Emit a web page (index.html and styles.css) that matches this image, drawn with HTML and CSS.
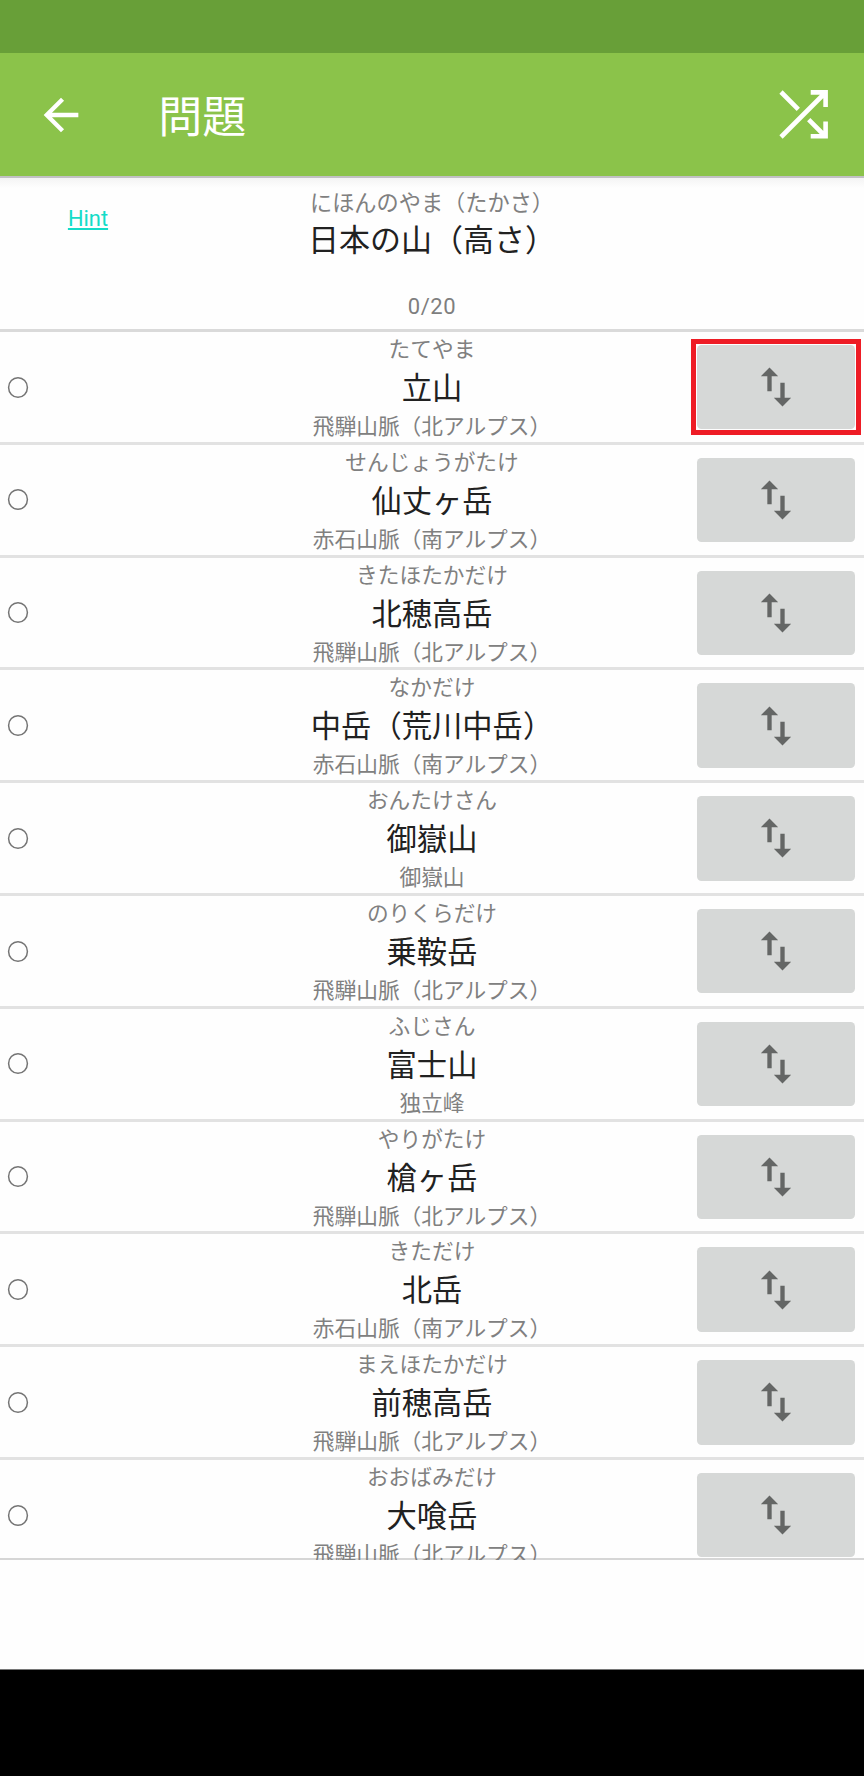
FILE: index.html
```html
<!DOCTYPE html>
<html lang="ja">
<head>
<meta charset="utf-8">
<title>問題</title>
<link rel="stylesheet" href="styles.css">
</head>
<body>
<svg class="defs" aria-hidden="true">
  <symbol id="swap" viewBox="0 0 24 24"><path d="M16 17.01V10h-2v7.01h-3L15 21l4-3.99h-3zM9 3L5 6.99h3V14h2V6.99h3L9 3z"/></symbol>
</svg>
<div class="screen">
  <div class="status-bar"></div>
  <header class="app-bar">
    <svg class="back" viewBox="0 0 24 24"><path d="M20 11H7.83l5.59-5.59L12 4l-8 8 8 8 1.41-1.41L7.83 13H20v-2z"/></svg>
    <h1 class="title">問題</h1>
    <svg class="shuffle" viewBox="0 0 49 49"><path d="M2 2 19.3 19.3M2 47 46 3M29.7 29.7 46 46M31.7 2.4H46.6V17M31.7 46.3H46.6V31.5"/></svg>
  </header>
  <section class="question">
    <a class="hint">Hint</a>
    <div class="question-text">
      <div class="question-kana">にほんのやま（たかさ）</div>
      <div class="question-name">日本の山（高さ）</div>
      <div class="count">0/20</div>
    </div>
  </section>
  <main class="list" id="list"></main>
  <div class="footer"></div>
  <div class="nav-bar"></div>
</div>
<script src="app.js"></script>
</body>
</html>
```
FILE: styles.css
```css
* { box-sizing: border-box; }
body {
  margin: 0;
  background: #fefefe;
  font-family: "Noto Sans CJK JP", sans-serif;
  color: #212121;
}
.defs { position: absolute; width: 0; height: 0; }
.screen {
  width: 864px;
  height: 1776px;
  display: flex;
  flex-direction: column;
  overflow: hidden;
}
.screen > * { flex-shrink: 0; }
.status-bar { height: 53px; background: #689f38; }
.app-bar {
  height: 123px;
  display: flex;
  align-items: center;
  padding: 0 36.5px 0 35.4px;
  background: #8bc34a;
}
.back { width: 52px; height: 52px; fill: #fff; }
.title {
  margin: 0 auto 2px 70.8px;
  font-size: 44px;
  font-weight: 400;
  line-height: 64px;
  color: #fff;
}
.shuffle {
  width: 49px;
  height: 49px;
  fill: none;
  stroke: #fff;
  stroke-width: 4.6;
}
.question {
  height: 156px;
  display: grid;
  grid-template-columns: 176px 1fr 176px;
  border-top: 2px solid #c2c1c4;
  border-bottom: 3px solid #dadada;
  background: linear-gradient(#f4f4f4, #fefefe 10px);
}
.hint {
  justify-self: center;
  margin-top: 28px;
  height: 26px;
  font: 21.9px/26px Roboto, sans-serif;
  color: #14dcc8;
  text-decoration: underline;
  text-decoration-thickness: 1.5px;
  text-underline-offset: 2px;
}
.question-text { text-align: center; white-space: nowrap; }
.question-kana {
  margin-top: 7px;
  font-size: 22.2px;
  line-height: 32px;
  color: #808080;
}
.question-name { font-size: 31px; line-height: 42px; }
.count {
  margin-top: 35px;
  font: 22px/26px Roboto, sans-serif;
  letter-spacing: .6px;
  color: #7e7e7e;
}
.list {
  height: 1228px;
  overflow: hidden;
  background: linear-gradient(#d6d6d6, #d6d6d6) bottom / 100% 2px no-repeat;
}
.row {
  height: 112.8px;
  display: grid;
  grid-template-columns: 176px 1fr 176px;
  border-bottom: 3px solid #e2e2e2;
}
.radio {
  width: 22px;
  height: 23px;
  margin: 43.6px 0 0 6.5px;
  fill: none;
  stroke: #747474;
  stroke-width: 1.5;
}
.labels { text-align: center; white-space: nowrap; }
.kana, .range { font-size: 21.7px; color: #808080; }
.kana { line-height: 31px; }
.name { font-size: 30.3px; line-height: 47px; }
.range { line-height: 30px; }
.swap {
  position: relative;
  width: 158px;
  height: 84.4px;
  margin: 13px 0 0 9px;
  display: flex;
  align-items: center;
  justify-content: center;
  border-radius: 4.5px;
  background: #d6d8d7;
}
.swap svg { width: 52px; height: 52px; fill: #646665; }
.swap.marked::after {
  content: "";
  position: absolute;
  inset: -6px;
  border: 5px solid #ee1c25;
}
.footer { height: 110px; border-bottom: 1px solid #777; }
.nav-bar { height: 106px; background: #000; }
```
FILE: app.js
```js
const north = "飛騨山脈（北アルプス）";
const south = "赤石山脈（南アルプス）";
const rows = [
  ["たてやま", "立山", north],
  ["せんじょうがたけ", "仙丈ヶ岳", south],
  ["きたほたかだけ", "北穂高岳", north],
  ["なかだけ", "中岳（荒川中岳）", south],
  ["おんたけさん", "御嶽山", "御嶽山"],
  ["のりくらだけ", "乗鞍岳", north],
  ["ふじさん", "富士山", "独立峰"],
  ["やりがたけ", "槍ヶ岳", north],
  ["きただけ", "北岳", south],
  ["まえほたかだけ", "前穂高岳", north],
  ["おおばみだけ", "大喰岳", north],
];
document.getElementById("list").innerHTML = rows.map(([kana, name, range], i) => `
  <div class="row">
    <svg class="radio" viewBox="0 0 22 23"><ellipse cx="11" cy="11.5" rx="9.4" ry="9.8"/></svg>
    <div class="labels">
      <div class="kana">${kana}</div>
      <div class="name">${name}</div>
      <div class="range">${range}</div>
    </div>
    <div class="swap${i === 0 ? " marked" : ""}"><svg><use href="#swap"/></svg></div>
  </div>`).join("");
```
